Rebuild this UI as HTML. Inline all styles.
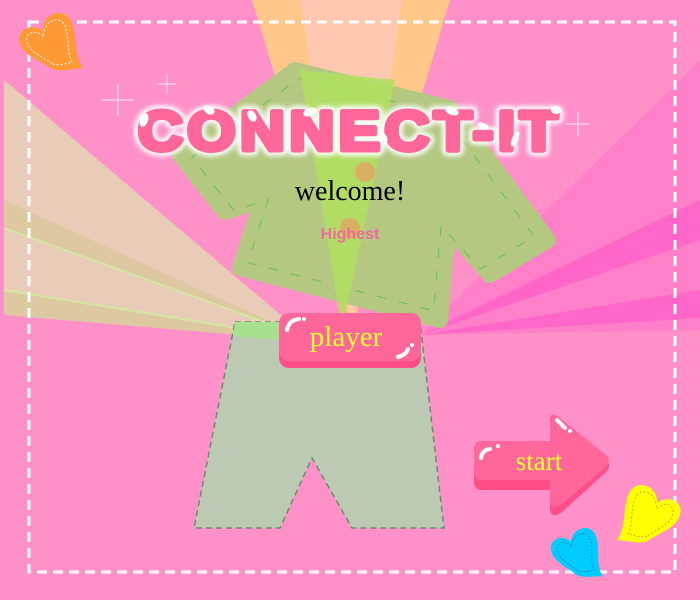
<!DOCTYPE html>
<html><head><style>html,body{margin:0;padding:0;background:#ff91c8;}svg{display:block}</style></head>
<body>
<svg width="700" height="600" viewBox="0 0 700 600" xmlns="http://www.w3.org/2000/svg">
<defs>
<filter id="glow" x="-10%" y="-30%" width="120%" height="160%"><feGaussianBlur stdDeviation="2"/></filter>
</defs>
<rect width="700" height="600" fill="#ff91c8"/>
<polygon points="420,335 700,60 700,330" fill="#ff80c8"/>
<polygon points="420,335 700,200 700,240" fill="#ff66c8"/>
<polygon points="420,335 700,290 700,318" fill="#ff66c8"/>
<polygon points="4,80 4,312 310,340" fill="#e8ccb8"/>
<polygon points="4,200 4,228 300,335" fill="#ddc8a2"/>
<polygon points="4,290 4,315 300,340" fill="#ddc8a2"/>
<line x1="4" y1="228" x2="300" y2="335" stroke="#d6e6a0" stroke-width="2"/>
<line x1="4" y1="290" x2="300" y2="338" stroke="#d6e6a0" stroke-width="2"/>
<polygon points="252,0 450,0 352,330" fill="#ffc88a"/>
<polygon points="300,0 402,0 352,330" fill="#ffc8b0"/>
<polygon points="295,70 450,108 548,240 490,275 448,228 440,320 240,268 262,200 225,212 180,155" fill="#b4c882" stroke="#b4c882" stroke-width="16" stroke-linejoin="round"/>
<polygon points="295,70 450,108 548,240 490,275 448,228 440,320 240,268 262,200 225,212 180,155" fill="none" stroke="#5cc24a" stroke-width="1" stroke-dasharray="10 14" transform="translate(350,190) scale(0.93) translate(-350,-190)"/>
<polygon points="300,70 395,80 342,330" fill="#b0e060" opacity="0.85"/>
<circle cx="365" cy="172" r="10" fill="#d8b060"/>
<circle cx="350" cy="228" r="10" fill="#d8b060"/>
<polygon points="235,322 420,322 444,528 352,528 312,458 280,528 194,528" fill="#bccab4" stroke="#6a8a6a" stroke-width="1.5" stroke-dasharray="6 4"/>
<polygon points="235,322 280,322 280,340 233,336" fill="#a8e090"/>
<rect x="29" y="22" width="646" height="550" fill="none" stroke="#fff" stroke-width="3" stroke-dasharray="10 6"/>
<g stroke="#fff" stroke-width="1" opacity="0.8">
<line x1="118" y1="84" x2="118" y2="116"/><line x1="102" y1="100" x2="134" y2="100"/>
<line x1="167" y1="75" x2="167" y2="93"/><line x1="158" y1="84" x2="176" y2="84"/>
<line x1="578" y1="112" x2="578" y2="136"/><line x1="566" y1="124" x2="590" y2="124"/>
</g>
<text x="350" y="150" text-anchor="middle" font-family="Liberation Sans, sans-serif" font-weight="bold" font-size="56" textLength="424" lengthAdjust="spacingAndGlyphs" letter-spacing="4" fill="none" stroke="#fff" stroke-width="12" stroke-linejoin="round" filter="url(#glow)" opacity="0.9">CONNECT-IT</text>
<text x="350" y="150" text-anchor="middle" font-family="Liberation Sans, sans-serif" font-weight="bold" font-size="56" textLength="424" lengthAdjust="spacingAndGlyphs" letter-spacing="4" fill="#ff6699" stroke="#ff6699" stroke-width="5" stroke-linejoin="round">CONNECT-IT</text>
<g fill="#fff">
<ellipse cx="144" cy="120" rx="4" ry="7" transform="rotate(20 144 120)"/>
<ellipse cx="209" cy="110" rx="6" ry="4" transform="rotate(30 209 110)"/>
<ellipse cx="252" cy="116" rx="4" ry="6" transform="rotate(-30 252 116)"/>
<ellipse cx="310" cy="112" rx="7" ry="4" transform="rotate(-20 310 112)"/>
<ellipse cx="383" cy="138" rx="4" ry="6" transform="rotate(-30 383 138)"/>
<ellipse cx="452" cy="111" rx="7" ry="4" transform="rotate(20 452 111)"/>
<ellipse cx="483" cy="126" rx="6" ry="3" transform="rotate(20 483 126)"/>
<ellipse cx="515" cy="139" rx="3" ry="8" transform="rotate(25 515 139)"/>
<ellipse cx="556" cy="110" rx="5" ry="4"/>
</g>
<text x="350" y="200" text-anchor="middle" font-family="Liberation Serif, serif" font-size="28" fill="#000">welcome!</text>
<text x="350" y="239" text-anchor="middle" font-family="Liberation Sans, sans-serif" font-weight="bold" font-size="16" fill="#f06a9a">Highest</text>
<rect x="279" y="314" width="142" height="54" rx="10" fill="#ff4d88"/>
<rect x="279" y="313" width="142" height="48" rx="10" fill="#ff6699"/>
<path d="M287,330 q2,-10 12,-11" stroke="#fff" stroke-width="4" fill="none" stroke-linecap="round"/>
<circle cx="304" cy="319" r="2" fill="#fff"/>
<path d="M398,357 q8,-2 10,-8" stroke="#fff" stroke-width="4" fill="none" stroke-linecap="round"/>
<circle cx="412" cy="345" r="2" fill="#fff"/>
<text x="346" y="346" text-anchor="middle" font-family="Liberation Serif, serif" font-size="29" fill="#ffff33">player</text>
<path d="M482,446 H550 V423 Q550,412 560,420 L606,460 Q612,466 606,472 L562,512 Q550,520 550,508 V490 H482 Q474,490 474,482 V454 Q474,446 482,446Z" fill="#ff4d88"/>
<path d="M482,441 H550 V420 Q550,410 560,418 L606,455 Q612,461 606,467 L562,504 Q550,512 550,500 V480 H482 Q474,480 474,472 V449 Q474,441 482,441Z" fill="#ff6699"/>
<path d="M481,458 q1,-8 9,-9" stroke="#fff" stroke-width="4" fill="none" stroke-linecap="round"/>
<circle cx="498" cy="446" r="2" fill="#fff"/>
<path d="M557,420 l8,8" stroke="#fff" stroke-width="4" stroke-linecap="round"/>
<circle cx="570" cy="431" r="2" fill="#fff"/>
<text x="539" y="470" text-anchor="middle" font-family="Liberation Serif, serif" font-size="27" fill="#ffff33">start</text>
<g transform="translate(48,40) rotate(-10)">
<path d="M0,30 C-12,18 -30,10 -28,-6 C-26,-18 -10,-18 -4,-10 C0,-28 22,-30 26,-14 C30,0 22,20 30,34 C18,32 8,34 0,30Z" fill="#ff9933"/>
<path d="M0,24 C-10,14 -22,8 -21,-4 C-19,-12 -9,-12 -4,-4 C0,-22 17,-22 19,-11 C22,0 16,16 20,26 C12,26 6,28 0,24Z" fill="none" stroke="#fff" stroke-width="1" stroke-dasharray="2 2"/>
</g>
<g transform="translate(652,512) rotate(10)">
<path d="M0,30 C-12,18 -30,10 -28,-6 C-26,-18 -10,-18 -4,-10 C0,-28 22,-30 26,-14 C30,0 22,20 30,34 C18,32 8,34 0,30Z" fill="#ffff00" transform="scale(-1,1)"/>
<path d="M0,24 C-10,14 -22,8 -21,-4 C-19,-12 -9,-12 -4,-4 C0,-22 17,-22 19,-11 C22,0 16,16 20,26 C12,26 6,28 0,24Z" fill="none" stroke="#b8b800" stroke-width="1" stroke-dasharray="2 2" transform="scale(-1,1)"/>
</g>
<g transform="translate(575,550) scale(0.85) rotate(-5)">
<path d="M0,30 C-12,18 -30,10 -28,-6 C-26,-18 -10,-18 -4,-10 C0,-28 22,-30 26,-14 C30,0 22,20 30,34 C18,32 8,34 0,30Z" fill="#00ccff"/>
<path d="M0,24 C-10,14 -22,8 -21,-4 C-19,-12 -9,-12 -4,-4 C0,-22 17,-22 19,-11 C22,0 16,16 20,26 C12,26 6,28 0,24Z" fill="none" stroke="#0088aa" stroke-width="1" stroke-dasharray="2 2"/>
</g>
</svg>
</body></html>
